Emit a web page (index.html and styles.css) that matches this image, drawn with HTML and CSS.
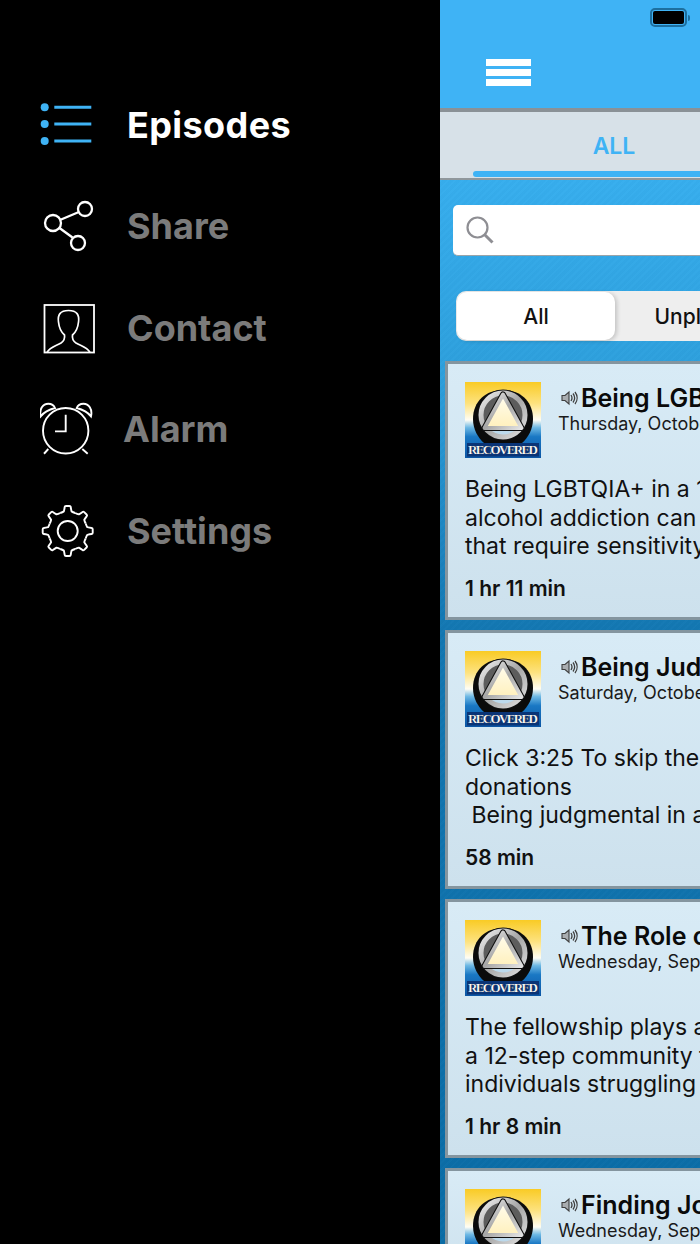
FILE: index.html
```html
<!DOCTYPE html>
<html lang="en">
<head>
<meta charset="utf-8">
<title>Episodes</title>
<link rel="stylesheet" href="styles.css">
</head>
<body>
<svg class="defs" width="0" height="0" aria-hidden="true">
  <defs>
    <linearGradient id="sky" x1="0" y1="0" x2="0" y2="1">
      <stop offset="0" stop-color="#f9cb25"/>
      <stop offset=".28" stop-color="#fde27e"/>
      <stop offset=".5" stop-color="#fffdf4"/>
      <stop offset=".6" stop-color="#6db8e4"/>
      <stop offset=".72" stop-color="#1a78c4"/>
      <stop offset="1" stop-color="#0b55a4"/>
    </linearGradient>
    <linearGradient id="ring" x1="0" y1="0" x2="1" y2="1">
      <stop offset="0" stop-color="#efefef"/>
      <stop offset=".5" stop-color="#a6a6a6"/>
      <stop offset="1" stop-color="#e2e2e2"/>
    </linearGradient>
    <linearGradient id="inner" x1="0" y1="0" x2="0" y2="1">
      <stop offset="0" stop-color="#fffdf0"/>
      <stop offset="1" stop-color="#fff0bc"/>
    </linearGradient>
    <symbol id="logo" viewBox="0 0 76 76">
      <rect width="76" height="76" fill="url(#sky)"/>
      <path d="M8 37C8 19 21 8 38 8s30 11 30 29c0 10-5 19-11 24H19C13 56 8 47 8 37z" fill="#0b0b0b"/>
      <circle cx="38" cy="33" r="25.500" fill="#111"/>
      <circle cx="38" cy="33" r="21" fill="#5d5d5d"/>
      <path d="M22 49a21 21 0 0 0 32 0z" fill="#bcd9ec"/>
      <circle cx="38" cy="33" r="22" fill="none" stroke="url(#ring)" stroke-width="5"/>
      <path d="M38 12.500L56.500 46h-37z" fill="url(#inner)" stroke="#111" stroke-width="6" stroke-linejoin="round"/>
      <path d="M38 12.500L56.500 46h-37z" fill="url(#inner)" stroke="url(#ring)" stroke-width="3.800" stroke-linejoin="round"/>
      <rect x="2" y="61" width="72" height="13.500" fill="#0a3476"/>
      <text class="logo-text" x="38" y="72" text-anchor="middle" textLength="70">RECOVERED</text>
    </symbol>
    <symbol id="speaker" viewBox="0 0 17 16">
      <path d="M1 5.500h3L8 2v12l-4-3.500H1z" fill="#a9adb0" stroke="#3f3f3f" stroke-width="1.100"/>
      <path d="M10 5c1.200 1.800 1.200 4.200 0 6M12 3.500c2 2.700 2 6.300 0 9M14 2c2.800 3.600 2.800 8.400 0 12" fill="none" stroke="#3f3f3f" stroke-width="1.300"/>
    </symbol>
  </defs>
</svg>

<div class="app">
  <nav class="drawer">
    <a class="nav-item active">
      <svg class="nav-icon" viewBox="0 0 56 56">
        <circle cx="4.700" cy="10.250" r="4" fill="#3fb3f5"/><circle cx="4.700" cy="27" r="4" fill="#3fb3f5"/><circle cx="4.700" cy="44" r="4" fill="#3fb3f5"/>
        <path d="M14.300 10.250h37M14.300 27h37M14.300 44h37" stroke="#3fb3f5" stroke-width="3" fill="none"/>
      </svg>
      <span>Episodes</span>
    </a>
    <a class="nav-item">
      <svg class="nav-icon" viewBox="0 0 56 56">
        <g fill="none" stroke="#fff" stroke-width="2.300">
          <circle cx="13" cy="25" r="8"/><circle cx="45" cy="11" r="7"/><circle cx="38" cy="45" r="7"/>
          <path d="M20.500 21.700l17.800-7.500M19.500 30l13 9.500"/>
        </g>
      </svg>
      <span>Share</span>
    </a>
    <a class="nav-item">
      <svg class="nav-icon" viewBox="0 0 56 56">
        <rect x="4.500" y="5" width="49.500" height="47.500" fill="none" stroke="#fff" stroke-width="1.800"/>
        <path d="M7 52.500C10 47 16 46 21 43c3-2 4-5 3.500-8-3.500-3-5.500-8-6-13-1-7 1.500-11.500 10-11.500s11 4.500 10 11.500c-.5 5-2.500 10-6 13-.5 3 .5 6 3.500 8 5 3 11 4 14 9.500" fill="none" stroke="#fff" stroke-width="1.700"/>
      </svg>
      <span>Contact</span>
    </a>
    <a class="nav-item alarm">
      <svg class="nav-icon" viewBox="0 0 56 56">
        <g fill="none" stroke="#fff" stroke-width="1.900">
          <circle cx="25.700" cy="29.750" r="22.700"/>
          <path d="M.7 15.400C-1 8 3 2.750 8.300 2.750 11 2.750 14 4.500 15 7 9 8.500 4 11 .7 15.400zM51 15.400C52.700 8 48.700 2.750 43.400 2.750 40.700 2.750 37.700 4.500 36.700 7 42.700 8.500 47.700 11 51 15.400z"/>
          <path d="M25.700 13.750V30.400H15M8.300 48L4 52.750M42.300 48l5.400 4.750"/>
        </g>
      </svg>
      <span>Alarm</span>
    </a>
    <a class="nav-item">
      <svg class="nav-icon" viewBox="0 0 56 56">
        <g fill="none" stroke="#fff" stroke-width="1.900" stroke-linejoin="round">
          <circle cx="27.700" cy="28" r="10"/>
          <path id="tooth" d="M20.240 10Q22.500 9.300 23.880 8.370 24.400 6 24.700 4 24.800 3 26 3H29.400Q30.600 3 30.700 4 31 6 31.520 8.370 32.900 9.300 35.160 10"/>
          <use href="#tooth" transform="rotate(45 27.700 28)"/>
          <use href="#tooth" transform="rotate(90 27.700 28)"/>
          <use href="#tooth" transform="rotate(135 27.700 28)"/>
          <use href="#tooth" transform="rotate(180 27.700 28)"/>
          <use href="#tooth" transform="rotate(225 27.700 28)"/>
          <use href="#tooth" transform="rotate(270 27.700 28)"/>
          <use href="#tooth" transform="rotate(315 27.700 28)"/>
        </g>
      </svg>
      <span>Settings</span>
    </a>
  </nav>

  <main class="main">
    <header class="topbar">
      <div class="status">
        <div class="battery"><div class="battery-level"></div></div>
        <div class="battery-cap"></div>
      </div>
      <div class="menu-button"><i></i><i></i><i></i></div>
    </header>

    <div class="tabs">
      <div class="tab">ALL</div>
      <div class="tab-indicator"></div>
    </div>

    <div class="content">
      <div class="search">
        <svg class="search-icon" viewBox="0 0 28 28">
          <circle cx="11.500" cy="11.500" r="10" fill="none" stroke="#8e8e93" stroke-width="2.200"/>
          <path d="M18.500 18.500l8 8" stroke="#8e8e93" stroke-width="3"/>
        </svg>
      </div>

      <div class="segments">
        <div class="segment selected">All</div>
        <div class="segment">Unplayed</div>
      </div>

      <article class="card">
        <div class="card-head">
          <svg class="thumb"><use href="#logo"/></svg>
          <div class="card-meta">
            <h2><svg class="speaker"><use href="#speaker"/></svg>Being LGBTQIA+ in a 12-Step</h2>
            <p class="date">Thursday, October 12, 2023</p>
          </div>
        </div>
        <p class="desc">Being LGBTQIA+ in a 12-step program
alcohol addiction can present challenges
that require sensitivity and support</p>
        <p class="duration">1 hr 11 min</p>
      </article>

      <article class="card">
        <div class="card-head">
          <svg class="thumb"><use href="#logo"/></svg>
          <div class="card-meta">
            <h2><svg class="speaker"><use href="#speaker"/></svg>Being Judgmental in AA</h2>
            <p class="date">Saturday, October 7, 2023</p>
          </div>
        </div>
        <p class="desc">Click 3:25 To skip the intro and
donations
 Being judgmental in a 12-step program</p>
        <p class="duration">58 min</p>
      </article>

      <article class="card">
        <div class="card-head">
          <svg class="thumb"><use href="#logo"/></svg>
          <div class="card-meta">
            <h2><svg class="speaker"><use href="#speaker"/></svg>The Role of Fellowship</h2>
            <p class="date">Wednesday, September 27, 2023</p>
          </div>
        </div>
        <p class="desc">The fellowship plays a vital role within
a 12-step community for those
individuals struggling with addiction</p>
        <p class="duration">1 hr 8 min</p>
      </article>

      <article class="card">
        <div class="card-head">
          <svg class="thumb"><use href="#logo"/></svg>
          <div class="card-meta">
            <h2><svg class="speaker"><use href="#speaker"/></svg>Finding Joy in Sobriety</h2>
            <p class="date">Wednesday, September 20, 2023</p>
          </div>
        </div>
      </article>
    </div>
  </main>
</div>
</body>
</html>
```

FILE: styles.css
```css
* { box-sizing: border-box; }
html, body { margin: 0; padding: 0; width: 700px; height: 1244px; overflow: hidden; background: #000; }
body { font-family: Inter, "Liberation Sans", sans-serif; }
.defs { display: block; width: 0; height: 0; overflow: hidden; }
.logo-text { font-family: "Liberation Serif", serif; font-size: 13px; font-weight: 700; font-variant: small-caps; fill: #fff; stroke: #000; stroke-width: .2px; }

.app { display: flex; width: 880px; height: 1244px; overflow: hidden; }

/* Drawer */
.drawer { flex: 0 0 440px; background: #000; padding: 74px 0 0 40px; display: flex; flex-direction: column; }
.nav-item { display: flex; flex: none; align-items: center; height: 101.5px; color: #7b7b7b; font-size: 36px; font-weight: 700; }
.nav-item.active { color: #fff; letter-spacing: .4px; }
.nav-icon { flex: 0 0 56px; width: 56px; height: 56px; margin-right: 31px; }
.nav-item.alarm .nav-icon { margin-right: 27px; }

/* Main */
.main { flex: 0 0 440px; display: flex; flex-direction: column; height: 1244px; }

.topbar { flex: none; height: 112px; background: #3fb3f5; border-bottom: 4px solid #8a9196; padding: 8px 0 0 210px; }
.status { display: flex; align-items: center; gap: 1px; height: 19px; }
.battery { width: 37px; height: 19px; border: 2px solid #1d6f9f; border-radius: 5px; padding: 1px; }
.battery-level { width: 100%; height: 100%; background: #000; border-radius: 2px; }
.battery-cap { width: 2px; height: 6px; background: #1d6f9f; border-radius: 0 2px 2px 0; }
.menu-button { display: flex; flex-direction: column; gap: 3px; width: 45px; margin: 32px 0 0 -164px; }
.menu-button i { display: block; height: 7px; background: #fff; }

.tabs { flex: none; height: 68px; background: #d7e1e8; border-bottom: 2px solid #8f979c; padding: 18px 0 0 33px; display: flex; flex-direction: column; }
.tab { width: 282px; text-align: center; color: #3fb3f5; font-size: 23px; font-weight: 600; line-height: 32px; }
.tab-indicator { height: 6px; margin-top: 9px; width: 300px; background: #3fb3f5; border-radius: 3px; }

.content {
  flex: 1;
  padding: 25px 0 0 5px;
  background:
    repeating-linear-gradient(135deg, rgba(255,255,255,.012) 0 2px, rgba(0,0,0,.012) 2px 5px),
    linear-gradient(180deg, #37aeee 0, #2d9fdc 200px, #1377b2 450px, #0a6ca6 1064px);
}

.search { display: flex; align-items: center; height: 51px; margin-left: 8px; width: 420px; background: #fff; border-radius: 5px; border-bottom: 1px solid #9aa4a9; padding-left: 13px; }
.search-icon { width: 28px; height: 28px; }

.segments { display: flex; margin: 35px 0 0 11px; width: 332px; height: 50px; background: #eeeeee; border-radius: 10px; }
.segment { flex: 0 0 172px; display: flex; align-items: center; justify-content: center; font-size: 21px; font-weight: 500; color: #111; }
.segment.selected { flex: 0 0 158px; background: #fff; border-radius: 10px; box-shadow: 2px 1px 4px rgba(0,0,0,.18); margin: 1px; }

.card {
  flex: none;
  width: 420px;
  height: 259px;
  margin-top: 10px;
  padding: 18px 0 0 17px;
  background: linear-gradient(180deg, #d8ebf6, #cde1ed);
  border: 3px solid #84959f;
}
.segments + .card { margin-top: 20px; }
.card:last-child { height: 120px; }
.card-head { display: flex; align-items: flex-start; }
.thumb { flex: 0 0 76px; width: 76px; height: 76px; }
.card-meta { margin-left: 17px; padding-top: 1px; white-space: nowrap; }
.card h2 { margin: 0; display: flex; align-items: center; font-size: 25px; font-weight: 600; line-height: 30px; color: #0a0a0a; }
.speaker { width: 17px; height: 16px; margin: 0 3px; flex: none; }
.date { margin: 0; font-size: 18px; line-height: 22px; color: #1a1a1a; }
.desc { margin: 17px 0 0; font-size: 23px; line-height: 28.5px; color: #111; white-space: pre; }
.duration { margin: 16px 0 0; font-size: 21px; font-weight: 600; line-height: 24px; color: #111; }
```
